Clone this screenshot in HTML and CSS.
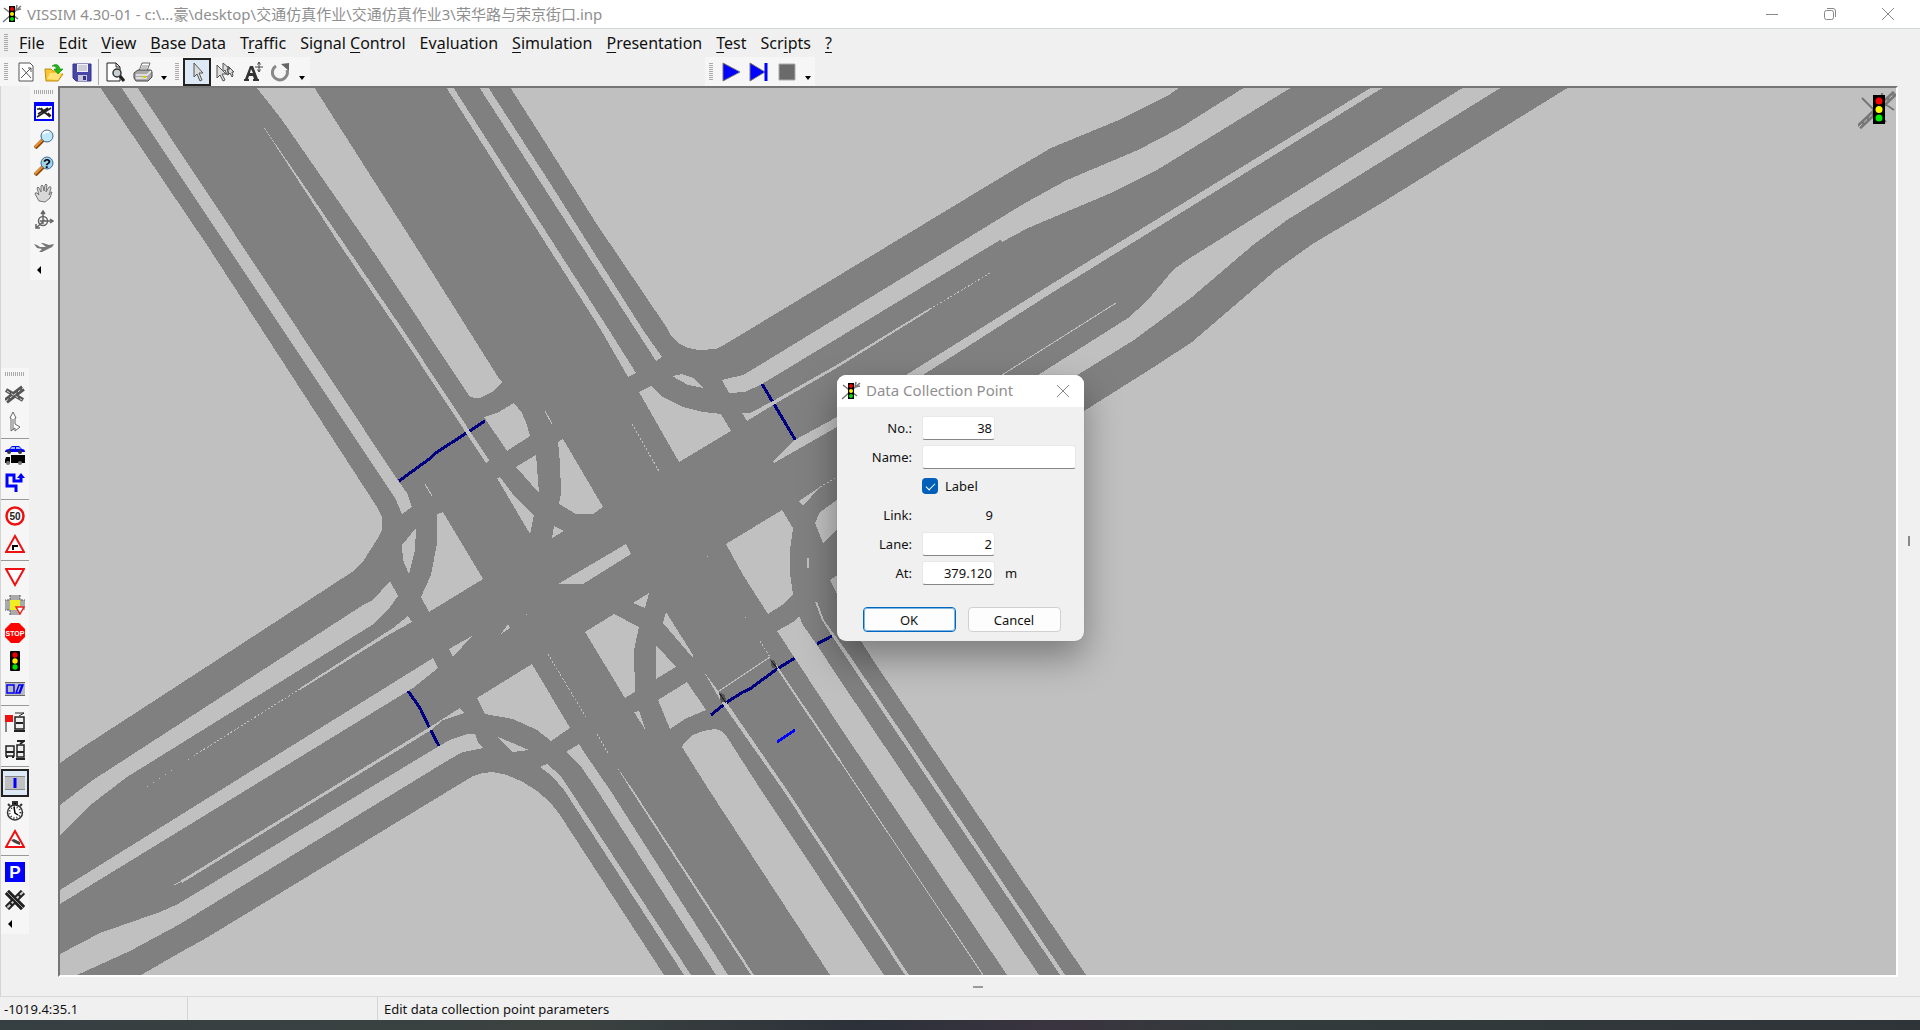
FILE: index.html
```html
<!DOCTYPE html>
<html lang="en">
<head>
<meta charset="utf-8">
<title>VISSIM 4.30-01</title>
<link rel="stylesheet" href="styles.css">
</head>
<body>
<svg class="defs" aria-hidden="true">
  <symbol id="logo" viewBox="0 0 20 20">
    <path d="M1 18L19 2M2 4l14 11M15 1l-1 5 5-1" fill="none" stroke="#777" stroke-width="1.500"/>
    <path d="M7 2h6v16H7z"/><circle cx="10" cy="5" r="2" fill="#e00"/><circle cx="10" cy="10" r="2" fill="#fe0"/><circle cx="10" cy="15" r="2" fill="#0d0"/>
  </symbol>
  <symbol id="close" viewBox="0 0 14 14"><path d="M1 1l12 12M13 1L1 13" fill="none" stroke="#888" stroke-width="1"/></symbol>
</svg>
<div class="window">
  <header class="titlebar">
    <svg class="logo"><use href="#logo"/></svg>
    <h1 class="title">VISSIM 4.30-01 - c:\...豪\desktop\交通仿真作业\交通仿真作业3\荣华路与荣京街口.inp</h1>
    <button class="winbtn" aria-label="Minimize"><svg width="14" height="14"><path d="M1 7.500h12" stroke="#888"/></svg></button>
    <button class="winbtn" aria-label="Restore"><svg width="14" height="14" fill="none" stroke="#888"><rect x="1.500" y="3.500" width="9" height="9" rx="2"/><path d="M4 1.500h6a2.500 2.500 0 0 1 2.500 2.500v6"/></svg></button>
    <button class="winbtn" aria-label="Close"><svg width="14" height="14"><use href="#close"/></svg></button>
  </header>

  <nav class="menubar">
    <span class="grip"></span>
    <button><u>F</u>ile</button><button><u>E</u>dit</button><button><u>V</u>iew</button><button><u>B</u>ase Data</button><button>T<u>r</u>affic</button><button>Signal <u>C</u>ontrol</button><button>Ev<u>a</u>luation</button><button><u>S</u>imulation</button><button><u>P</u>resentation</button><button><u>T</u>est</button><button>Scr<u>i</u>pts</button><button><u>?</u></button>
  </nav>

  <div class="toolbars">
    <div class="toolbar file-tools">
      <span class="grip"></span>
      <button aria-label="New"><svg viewBox="0 0 20 20"><path d="M3 1h11l3 3v15H3z" fill="#fff" stroke="#555"/><path d="M5 16L15 6M6 6l9 10M12 6h3v4" fill="none" stroke="#555"/></svg></button>
      <button aria-label="Open"><svg viewBox="0 0 20 20"><path d="M1 7h6l2 2h6v3h4l-5 7H2z" fill="#f8c634" stroke="#c08a10"/><path d="M3 17l3-6h12l-4 7z" fill="#ffe27a"/><path d="M8 4q6-4 8 3h3l-5 5-4-5h3q-2-4-5-3z" fill="#22b814" stroke="#0b7a08" stroke-width=".6"/></svg></button>
      <button aria-label="Save"><svg viewBox="0 0 20 20"><path d="M1 2h18v17H4l-3-3z" fill="#4746a8" stroke="#33328a"/><path d="M5 2h11v8H5z" fill="#f0f0f6"/><path d="M6 4h9M6 6h9M6 8h9" stroke="#aab"/><path d="M6 13h9v6H6z" fill="#c8c8d4"/><path d="M11 14h3v4h-3z" fill="#33328a"/></svg></button>
      <span class="vsep"></span>
      <button aria-label="Print preview"><svg viewBox="0 0 20 20"><path d="M2 1h9l4 4v14H2z" fill="#fff" stroke="#222"/><path d="M11 1v4h4" fill="none" stroke="#222"/><circle cx="12" cy="11" r="4" fill="#c8d0d4" stroke="#333" stroke-width="1.500"/><path d="M15 14l4 5" stroke="#222" stroke-width="3"/></svg></button>
      <button aria-label="Print"><svg viewBox="0 0 20 20"><path d="M6 9l3-8h8l-3 8z" fill="#fff" stroke="#666"/><path d="M9 4h6M8 6h6" stroke="#888"/><path d="M1 11l4-3h13l1 2v5l-4 4H3l-2-3z" fill="#aaa" stroke="#444"/><path d="M3 13h11l4-4M3 16h11" fill="none" stroke="#eee" stroke-width="1.500"/><path d="M10 15h3" stroke="#dc0" stroke-width="2"/></svg></button>
      <button class="more" aria-label="More file tools"></button>
      <span class="grip"></span>
      <button class="selected" aria-label="Select"><svg viewBox="0 0 20 20"><path d="M7 1v14l3-3 3 7 2-1-3-7h4z" fill="#ddd" stroke="#555"/></svg></button>
      <button aria-label="Multiple select"><svg viewBox="0 0 20 20" fill="#ddd" stroke="#555"><path d="M8 1v9l2-2 2 5 2-1-2-5h3zM13 4v9l2-2 2 4 1-1-1-4h2z"/><path d="M2 3v13l3-3 3 6 2-1-3-6h4z"/></svg></button>
      <button aria-label="Label mode"><svg viewBox="0 0 20 20"><path d="M1 19h5v-2H5l1-3h4l1 3h-1v2h6v-2h-1L10 4H7L2 17H1zM7 11l1-4 2 4z" fill="#333"/><path d="M16 1v8M12 5h8" stroke="#444"/><path d="M14.500 2.500L16 0l1.500 2.500M14.500 7.500L16 10l1.500-2.500" fill="none" stroke="#444"/></svg></button>
      <button aria-label="Refresh"><svg viewBox="0 0 20 20"><path d="M5 4a7.500 7.500 0 1 0 11 4" fill="none" stroke="#888" stroke-width="3"/><path d="M10 2l8-1v8z" fill="#666"/></svg></button>
      <button class="more" aria-label="More edit tools"></button>
    </div>
    <div class="toolbar run-tools">
      <span class="grip"></span>
      <button aria-label="Run"><svg viewBox="0 0 20 20"><path d="M2 1l17 9-17 9z" fill="#00f" stroke="#777"/></svg></button>
      <button aria-label="Single step"><svg viewBox="0 0 20 20"><path d="M1 1l15 9-15 9z" fill="#00f" stroke="#777"/><path d="M17 1v18" stroke="#00f" stroke-width="3"/></svg></button>
      <button aria-label="Stop"><svg viewBox="0 0 20 20"><path d="M2 2h16v16H2z" fill="#6a6a6a" stroke="#aaa"/></svg></button>
      <button class="more" aria-label="More run tools"></button>
    </div>
  </div>

  <main class="workspace">
    <div class="sidetools element-tools">
      <span class="hgrip"></span>
      <button aria-label="Links"><svg viewBox="0 0 20 20"><path d="M1 6l17 10" stroke="#555" stroke-width="4"/><path d="M1 17L18 4" stroke="#555" stroke-width="6"/><path d="M1 17L18 4M2 7l15 9" stroke="#ddd" stroke-dasharray="3 2"/></svg></button>
      <button aria-label="Pavement markers"><svg viewBox="0 0 20 20"><path d="M6 19V6H5l3-6 3 6h-1v6l5 3-5 4v-3z" fill="#fff" stroke="#666"/><path d="M8 7v11" stroke="#666"/></svg></button>
      <span class="hsep"></span>
      <button aria-label="Vehicles"><svg viewBox="0 0 20 20"><path d="M0 6q1-2 4-2l3-3h7l3 3q3 0 3 3H0z" fill="#00f"/><path d="M5 4l2-2h3v2zM11 2h3l2 2h-5z" fill="#9bf"/><circle cx="4" cy="7" r="2" fill="#333"/><circle cx="15" cy="7" r="2" fill="#333"/><path d="M6 10h14v8H6zM1 12h4v6H0v-3z"/><circle cx="3" cy="18" r="2" fill="#777"/><circle cx="15" cy="18" r="2" fill="#777"/></svg></button>
      <button aria-label="Routes"><svg viewBox="0 0 20 20"><path d="M11 19v-6H2V2h7v6h7V5" fill="none" stroke="#00f" stroke-width="3"/><path d="M12 5l4-5 4 5z" fill="#00f"/></svg></button>
      <span class="hsep"></span>
      <button aria-label="Desired speed decisions"><svg viewBox="0 0 20 20"><circle cx="10" cy="10" r="8.500" fill="#fff" stroke="#e11" stroke-width="2.500"/><text x="10" y="14" class="sign50">50</text></svg></button>
      <button aria-label="Reduced speed areas"><svg viewBox="0 0 20 20"><path d="M10 2l9 16H1z" fill="#fff" stroke="#e11" stroke-width="2"/><path d="M8 16v-4h5" fill="none" stroke="#000" stroke-width="2"/></svg></button>
      <span class="hsep"></span>
      <button aria-label="Priority rules"><svg viewBox="0 0 20 20"><path d="M10 18L1 2h18z" fill="#fff" stroke="#e11" stroke-width="2"/></svg></button>
      <button aria-label="Conflict areas"><svg viewBox="0 0 20 20"><path d="M0 5h5V0h10v5h5v10h-5v5H5v-5H0z" fill="#aaa"/><path d="M5 0v5H0M15 0v5h5M5 20v-5H0" fill="none" stroke="#555" stroke-dasharray="2 1"/><path d="M5 5h10v10H5z" fill="#ee2"/><path d="M15 19l-4-7h8z" fill="#fff" stroke="#e22" stroke-width="1.500"/></svg></button>
      <button aria-label="Stop signs"><svg viewBox="0 0 20 20"><path d="M6 0h8l6 6v8l-6 6H6l-6-6V6z" fill="#f00"/><text x="10" y="13" class="signstop">STOP</text></svg></button>
      <button aria-label="Signal heads"><svg viewBox="0 0 20 20"><rect x="5" width="10" height="20" rx="1"/><circle cx="10" cy="4" r="2.700" fill="#e00"/><circle cx="10" cy="10" r="2.700" fill="#fe0"/><circle cx="10" cy="16" r="2.700" fill="#0d0"/></svg></button>
      <button aria-label="Detectors"><svg viewBox="0 0 20 20"><path d="M0 3h20v14H0z" fill="#bbb"/><path d="M0 3.500h20M0 16.500h20" stroke="#666"/><path d="M2 6h7v8H2zM11 14l3-8h4l-3 8zM14 14l3-8" fill="none" stroke="#00f" stroke-width="1.500"/></svg></button>
      <span class="hsep"></span>
      <button aria-label="Transit stops"><svg viewBox="0 0 20 20"><path d="M1 3v17" stroke="#888" stroke-width="2"/><path d="M0 3h8v7H0z" fill="#e11"/><path d="M10 1h9l-5 3" fill="none" stroke="#222"/><rect x="10" y="5" width="9" height="12" fill="#eee" stroke="#222" stroke-width="1.500"/><path d="M11 11h7M9 19h11" stroke="#222" stroke-width="2"/></svg></button>
      <button aria-label="Transit lines"><svg viewBox="0 0 20 20"><g fill="#eee" stroke="#222" stroke-width="1.500"><rect x="1" y="6" width="8" height="10"/><rect x="12" y="5" width="7" height="12"/></g><path d="M12 1h7l-4 3M1 12h8M12 12h7M1 17h2M7 17h2M11 19h9" fill="none" stroke="#222" stroke-width="2"/></svg></button>
      <span class="hsep"></span>
      <button class="selected" aria-label="Data collection points"><svg viewBox="0 0 20 20"><path d="M0 3h20v14H0z" fill="#c0c0c0"/><path d="M0 3.500h20M0 16.500h20" stroke="#888"/><path d="M10 5v10" stroke="#00f" stroke-width="3"/></svg></button>
      <button aria-label="Travel times"><svg viewBox="0 0 20 20"><path d="M8 1h4v3H8zM3 3l2 2M17 3l-2 2" stroke="#333" stroke-width="2"/><circle cx="10" cy="11.500" r="7.500" fill="#fff" stroke="#333" stroke-width="1.500"/><circle cx="10" cy="11.500" r="5.500" fill="none" stroke="#333" stroke-width="2" stroke-dasharray="1 2"/><path d="M9 6l1 6 3 2" fill="none" stroke="#000" stroke-width="1.500"/></svg></button>
      <button aria-label="Queue counters"><svg viewBox="0 0 20 20"><path d="M10 2l9 16H1z" fill="#fff" stroke="#e11" stroke-width="2"/><path d="M6 11l3-1 6 3v3l-3-1-4-2z" fill="#444"/></svg></button>
      <span class="hsep"></span>
      <button aria-label="Parking lots"><svg viewBox="0 0 20 20"><path d="M0 0h20v20H0z" fill="#00f"/><text x="10" y="16" class="signp">P</text></svg></button>
      <button aria-label="Nodes"><svg viewBox="0 0 20 20"><path d="M2 2l16 16M18 2L2 18" stroke="#222" stroke-width="6"/><path d="M18 2L2 18" stroke="#ccc" stroke-width="2" stroke-dasharray="4 2"/><path d="M2 2l16 16" stroke="#222" stroke-width="5"/><path d="M2 2l16 16" stroke="#999"/></svg></button>
      <button class="back" aria-label="More elements"></button>
    </div>

    <div class="sidetools view-tools">
      <span class="hgrip"></span>
      <button aria-label="Show entire network"><svg viewBox="0 0 20 20"><path d="M1 2h18v16H1z" fill="#fff" stroke="#00f" stroke-width="2"/><path d="M0 2h20" stroke="#00f" stroke-width="4"/><path d="M3 15L17 6M5 6l11 9M7 6l8 8M4 12l10-6M3 7h3M14 11l3 3" stroke="#222" stroke-width="1.500"/></svg></button>
      <button aria-label="Zoom"><svg viewBox="0 0 20 20"><path d="M1 19l9-9" stroke="#8a4a10" stroke-width="4"/><path d="M1 18l8-8" stroke="#f09030" stroke-width="2"/><circle cx="13" cy="7" r="6" fill="#bfe8fa" stroke="#468"/><path d="M9 5q2-3 6-2" fill="none" stroke="#fff" stroke-width="2"/></svg></button>
      <button aria-label="Previous view"><svg viewBox="0 0 20 20"><path d="M1 19l9-9" stroke="#8a4a10" stroke-width="4"/><path d="M1 18l8-8" stroke="#f09030" stroke-width="2"/><circle cx="13" cy="7" r="6" fill="#9fd4f0" stroke="#468"/><text x="13" y="12" class="query">?</text></svg></button>
      <button aria-label="Pan"><svg viewBox="0 0 20 20"><path d="M5 18L1 11q0-2 2-1l2 2-2-7q1-2 2 0l2 4V3q1-2 2 0l1 5 1-6q1-2 2 0l-1 7 3-5q2-1 2 1l-2 7q2-4 3-3l-2 6-5 4z" fill="#d8d8d8" stroke="#777"/></svg></button>
      <button aria-label="3D view"><svg viewBox="0 0 20 20" fill="none" stroke="#666" stroke-width="1.500"><circle cx="9" cy="11" r="4.500"/><path d="M9 14V2M7 4l2-3 2 3M6 11h13M16 9l3 2-3 2M11 10L2 18M2 14v4h4"/></svg></button>
      <button aria-label="Fly through"><svg viewBox="0 0 20 20"><path d="M0 7l3 1 3 2h6L7 6h2l6 2 5-1q-1 3-4 4l-8 4H5l3-3-5-1z" fill="#777"/></svg></button>
      <button class="back" aria-label="More view tools"></button>
    </div>

    <section class="mapcol">
      <div class="map">
        <svg class="network" role="img" aria-label="Road network">
          <g transform="translate(-60 -88)">
            <g class="points">
              <path d="M399 481L432 457 434 454 485 421M762 384L796 441M711 715L727 702 743 692 750 689 762 680 777 669 795 658M817 644L832 636M408 691L420 708 429 727 439 746"/>
              <path class="active" d="M777 742L795 730"/>
            </g>
            <g class="ground">
              <path d="M60 87H100L207 245 340 450 377 507 382 517 382 530 378 538 362 563 352 572 217 660 83 747 60 763z"/>
              <path d="M121 87L395 498 402 514 412 507 407 493 399 482 137 87z"/>
              <path d="M256 87L272 107 282 120 377 257 470 397 475 398 480 398 492 392 500 385 502 382 498 377 420 253 314 87z"/>
              <path d="M259 120L345 245 403 330 489 460 486 463 398 330 340 245z"/>
              <path d="M446 87L550 250 601 330 628 377 636 373 609 330 550 238 453 87z"/>
              <path d="M479 87L550 197 636 330 656 361 662 357 643 330 550 183 488 87z"/>
              <path d="M510 87L550 150 596 223 667 328 671 336 678 343 688 348 699 350 716 349 724 345 1005 175 1051 148 1119 120 1169 95 1180 87z"/>
              <path d="M722 380L743 375 750 371 1025 203 1067 180 1138 150 1180 128 1245 87H1292L1157 170 1111 193 1028 228 1002 242 1000 240 762 384 745 392 729 393z"/>
              <path d="M742 413L750 413 773 401 840 363 930 308 930 310 840 366 773 405 747 421z"/>
              <path d="M773 461L793 441 837 417 906 375 1050 285 1372 87H1384L1050 294 923 375 837 427 774 463z"/>
              <path d="M799 501L820 487 803 506z"/>
              <path d="M815 523L820 512 837 500 1038 375 1128 318 1146 302 1174 269 1190 258 1464 87H1502L1287 220 1253 245 1192 297 1134 340 1079 374 837 529 823 543z"/>
              <path d="M1569 87L1375 207 1314 243 1276 270 1192 342 1157 365 1084 411 830 580 861 641 873 660 1086 975 1500 1600H4000V87z"/>
              <path d="M777 631L793 622 799 616 803 625 817 645 840 680 1039 975H1007L840 727z"/>
              <path d="M815 602L817 602 824 620 834 634 850 656 1065 975H1060L848 660 832 636 822 620z"/>
              <path d="M704 672L725 700 787 790 909 975H905L783 790 722 703z"/>
              <path d="M682 747L685 742 693 735 703 731 715 729 722 731 727 737 761 790 884 975H830L709 790z"/>
              <path d="M615 764L633 790 754 975H751L631 790z"/>
              <path d="M566 752L579 744 584 752 610 790 728 975H716L597 790 582 768z"/>
              <path d="M540 767L547 764 560 775 570 790 691 975H684L564 790 552 776z"/>
              <path d="M141 975L188 948 203 940 473 776 483 773 493 772 507 775 523 782 537 791 550 802 560 815 664 975z"/>
              <path d="M60 954L100 933 160 912 178 904 439 746 450 740 467 734 475 734 478 742 483 748 463 752 450 759 180 924 130 951 77 975H60z"/>
              <path d="M60 890L433 658 438 668 413 688 408 691 60 904z"/>
              <path d="M180 881L430 727 460 708 464 713 443 720 431 730 182 883z"/>
              <path d="M60 805L93 780 363 605 373 600 390 581 398 596 388 610 372 625 127 777 93 803 60 835z"/>
              <path d="M408 616L412 622 390 634 300 690 300 688 393 628z"/>
              <path d="M484 417L497 413 514 403 522 413 527 425 530 436 507 451z"/>
              <path d="M516 467L536 455 539 493z"/>
              <path d="M558 442L563 439 603 507 593 514H576L559 504 561 493 560 463z"/>
              <path d="M497 478L500 477 515 497 534 515 530 534z"/>
              <path d="M554 526L564 531 552 538z"/>
              <path d="M558 584L626 544 631 554 583 584z"/>
              <path d="M639 392L651 386 663 397 683 407 703 412 721 414 731 431 679 462z"/>
              <path d="M672 376L682 374 693 378 703 388 688 385z"/>
              <path d="M726 544L782 510 793 528 790 550V573L793 595 782 605 768 614 743 575z"/>
              <path d="M807 558H809V568H807z"/>
              <path d="M437 514L443 512 483 579 429 612 421 597 431 575 437 543z"/>
              <path d="M416 528L415 550 409 574 403 560 402 545z"/>
              <path d="M449 649L472 636 453 657z"/>
              <path d="M501 634L508 624 510 628z"/>
              <path d="M477 698L532 664 570 728 551 741 537 730 513 719 485 714z"/>
              <path d="M498 737L529 750 513 752 507 747z"/>
              <path d="M585 632L614 614 639 627 634 650 635 692 625 698z"/>
              <path d="M633 603L649 593 645 608z"/>
              <path d="M666 612L693 655 693 658 663 623z"/>
              <path d="M656 645L676 667 656 679z"/>
              <path d="M658 700L687 682 706 710 685 719 670 729z"/>
              <path d="M634 712L639 711 646 731z"/>
            </g>
            <g class="gaps">
              <path class="wide" d="M772 660L840 761"/>
              <path d="M840 761L983 975M545 411L552 424M425 484L432 496M1002 375L1116 303M719 691L770 657M174 885L182 881"/>
              <path class="dotted" d="M930 309L992 272M820 487L837 477M760 641L770 657M548 654L587 719M597 734L609 755M632 424L660 473M300 689L195 755"/>
              <path class="sparse" d="M195 755L142 790M526 614L530 620M745 617L749 622M707 556L710 557"/>
            </g>
            <path class="handles" d="M719 692l6 3 1 6-5 2zM770 659l5 2 2 6-5 1z"/>
            <path class="handleline" d="M720 694L726 703M771 661L778 669"/>
          </g>
        </svg>
        <svg class="badge" viewBox="0 0 38 38" aria-hidden="true"><path d="M1 36L37 2" stroke="#777" stroke-width="6"/><path d="M1 36L37 2" stroke="#ccc" stroke-dasharray="4 3"/><path d="M4 7l24 24M24 2v9l12 8" fill="none" stroke="#777" stroke-width="2"/><path d="M15 4h12v29H15z"/><circle cx="21" cy="10" r="3.500" fill="#f00"/><circle cx="21" cy="18.500" r="3.500" fill="#ff0"/><circle cx="21" cy="27" r="3.500" fill="#0e0"/></svg>

        <form class="dialog" role="dialog" aria-labelledby="dlg-title" onsubmit="return false">
          <div class="dialog-head">
            <svg class="logo"><use href="#logo"/></svg>
            <h2 id="dlg-title">Data Collection Point</h2>
            <button type="button" aria-label="Close dialog"><svg width="14" height="14"><use href="#close"/></svg></button>
          </div>
          <div class="fields">
            <label for="no">No.:</label><input class="num" id="no" value="38">
            <label for="name">Name:</label><input id="name" class="name">
            <div class="check"><input type="checkbox" id="lab" checked><label for="lab">Label</label></div>
            <label for="link">Link:</label><output id="link" class="num">9</output>
            <label for="lane">Lane:</label><input class="num" id="lane" value="2">
            <label for="at">At:</label><input class="num" id="at" value="379.120"><span class="unit">m</span>
          </div>
          <div class="actions"><button class="primary">OK</button><button type="button">Cancel</button></div>
        </form>
      </div>
      <div class="split-h"><i></i></div>
    </section>
    <div class="split-v"><i></i></div>
  </main>

  <footer class="status"><span>-1019.4:35.1</span><span></span><span>Edit data collection point parameters</span></footer>
  <div class="taskbar"></div>
</div>
</body>
</html>
```
FILE: styles.css
```css
* { box-sizing: border-box; }
body { margin: 0; font-family: "Noto Sans", "Noto Sans CJK SC", sans-serif; color: #111; }
button { border: 0; padding: 0; margin: 0; background: none; font: inherit; color: inherit; }
.defs { position: absolute; width: 0; height: 0; }
.window { display: flex; flex-direction: column; height: 100vh; min-width: 960px; background: #f0f0f0; overflow: hidden; }

.titlebar { display: flex; align-items: center; height: 29px; background: #fff; border-bottom: 1px solid #d0d6d3; flex: none; }
.logo { width: 20px; height: 20px; flex: none; }
.titlebar .logo { margin-left: 2px; }
.title { flex: 1; margin: 0 0 0 5px; font-size: 15px; line-height: 20px; font-weight: 400; color: #8f8f8f; white-space: nowrap; }
.winbtn { width: 58px; height: 28px; display: grid; place-items: center; }
.winbtn:last-child { margin-right: 3px; }

.menubar { display: flex; align-items: center; height: 28px; flex: none; font-size: 16px; }
.menubar button { padding: 0 7px; line-height: 24px; }
.menubar u { text-underline-offset: 3px; }
.grip { width: 4px; height: 18px; margin: 0 4px; flex: none; background: repeating-linear-gradient(#aaa 0 1px, transparent 1px 2px); }

.toolbars { display: flex; height: 29px; flex: none; }
.toolbar { display: flex; align-items: center; background: #f6f6f6; }
.toolbar button { width: 28px; height: 28px; display: grid; place-items: center; }
.file-tools { width: 310px; }
.run-tools { width: 110px; margin-left: 395px; }
svg { display: block; }
.toolbar button svg, .sidetools button svg { width: 20px; height: 20px; }
.vsep { width: 1px; height: 26px; margin: 0 2px; background: #aaa; }
button.selected { border: 2px solid #222; background: #dde9f4; }
.toolbar .more { width: 14px; }
.more::after { content: ""; margin-top: 12px; border: 3px solid transparent; border-top: 4px solid #000; border-bottom: 0; }

.workspace { display: flex; flex: 1; min-height: 0; border-left: 1px solid #d4d4d4; }
.sidetools { display: flex; flex-direction: column; width: 28px; background: #f6f6f6; align-self: flex-start; flex: none; }
.element-tools { margin-top: 282px; }
.view-tools { margin-left: 1px; }
.sidetools button { height: 28px; flex: none; display: grid; place-items: center; }
.view-tools button { height: 27px; }
.hgrip { height: 4px; width: 20px; margin: 4px; background: repeating-linear-gradient(90deg, #aaa 0 1px, transparent 1px 2px); }
.hsep { height: 1px; margin: 2px 0; background: #999; }
.sidetools .back { height: 20px; }
.back::after { content: ""; margin-right: 10px; border: 4px solid transparent; border-right: 4px solid #000; border-left: 0; }
.sign50 { font: bold 10px "Liberation Sans", sans-serif; text-anchor: middle; fill: #222; }
.signstop { font: bold 7px "Liberation Sans", sans-serif; text-anchor: middle; fill: #fff; }
.signp { font: bold 17px "Liberation Sans", sans-serif; text-anchor: middle; fill: #fff; }
.query { font: bold 13px "Liberation Sans", sans-serif; text-anchor: middle; fill: #000; }

.mapcol { flex: 1; min-width: 0; display: flex; flex-direction: column; }
.map { position: relative; flex: 1; min-height: 0; background: #808080; border: 2px solid; border-color: #757575 #fff #fff #757575; overflow: hidden; }
.network { width: 100%; height: 100%; shape-rendering: crispEdges; }
.ground { fill: #c0c0c0; }
.points { fill: none; stroke: #000080; stroke-width: 3; }
.points .active { stroke: #00f; }
.gaps { fill: none; stroke: #c0c0c0; stroke-width: 1; }
.gaps .wide { stroke-width: 2; }
.gaps .dotted { stroke-dasharray: 2 2; }
.gaps .sparse { stroke-dasharray: 1 6; }
.handles { fill: #555; }
.handleline { stroke: #222; stroke-width: 1; }
.badge { position: absolute; top: 3px; right: 0; width: 38px; height: 38px; }

.split-h { height: 19px; display: flex; justify-content: center; align-items: center; flex: none; }
.split-h i { width: 10px; height: 2px; background: #999; }
.split-v { width: 22px; display: flex; justify-content: center; align-items: center; flex: none; }
.split-v i { width: 2px; height: 10px; background: #888; }

.dialog { position: absolute; left: 777px; top: 287px; width: 247px; border-radius: 9px; background: #f0f0f0; box-shadow: 0 0 1px #777, 0 16px 36px rgba(0, 0, 0, .36); font-size: 13px; }
.dialog-head { display: flex; align-items: center; height: 32px; padding: 0 14px 0 4px; border-radius: 9px 9px 0 0; background: #fff; }
.dialog-head h2 { flex: 1; margin: 0 0 0 5px; font-size: 15px; line-height: 20px; padding-bottom: 2px; font-weight: 400; color: #8f8f8f; white-space: nowrap; }
.fields { display: grid; grid-template-columns: 67px 73px 1fr; column-gap: 10px; grid-auto-rows: 24px; row-gap: 5px; padding: 9px 8px 0; align-items: center; }
.fields > label { grid-column: 1; text-align: right; line-height: 24px; }
.fields input:not([type]) { width: 100%; height: 24px; padding: 0 2px; border: 1px solid #e8e8e8; border-bottom: 1px solid #868686; border-radius: 3px; background: #fff; font: inherit; color: inherit; }
.fields .num { text-align: right; }
.fields output { padding-right: 2px; }
.fields .name { grid-column: 2 / 4; }
.check { grid-column: 2 / 4; display: flex; align-items: center; gap: 7px; }
.check input { appearance: none; width: 16px; height: 16px; margin: 0; border-radius: 4px; background: #005fb8; display: grid; place-items: center; }
.check input:checked::after { content: ""; width: 8px; height: 4px; border: solid #fff; border-width: 0 0 1px 1px; transform: translateY(-1px) rotate(-45deg); }
.actions { display: flex; gap: 12px; justify-content: center; padding: 22px 0 9px 2px; }
.actions button { width: 93px; height: 25px; border: 1px solid #d0d0d0; border-radius: 4px; background: #fdfdfd; }
.actions .primary { border: 1px solid #0067c0; outline: 1px solid #7db4e0; outline-offset: -2px; }

.status { display: flex; height: 24px; flex: none; border-top: 1px solid #d8d8d8; font-size: 13px; line-height: 24px; white-space: nowrap; }
.status span { width: 190px; padding-left: 6px; border-right: 1px solid #d4d4d4; }
.status span:first-child { width: 188px; padding-left: 4px; }
.status span:last-child { flex: 1; border: 0; }
.taskbar { height: 10px; flex: none; background: linear-gradient(90deg, #363f42, #3b4240 30%, #2c3139 45%, #3a343f 55%, #333b3c 65%, #2f3438); }
```
